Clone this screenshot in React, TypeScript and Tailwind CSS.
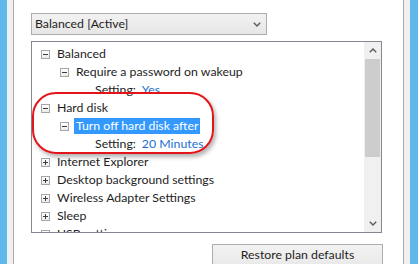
import React from 'react';

type Row = {
  level: number;
  label: string;
  kind: 'minus' | 'plus' | 'setting';
  value?: string;
  selected?: boolean;
};

const rows: Row[] = [
  { level: 0, label: 'Balanced', kind: 'minus' },
  { level: 1, label: 'Require a password on wakeup', kind: 'minus' },
  { level: 2, label: 'Setting:', kind: 'setting', value: 'Yes' },
  { level: 0, label: 'Hard disk', kind: 'minus' },
  { level: 1, label: 'Turn off hard disk after', kind: 'minus', selected: true },
  { level: 2, label: 'Setting:', kind: 'setting', value: '20 Minutes' },
  { level: 0, label: 'Internet Explorer', kind: 'plus' },
  { level: 0, label: 'Desktop background settings', kind: 'plus' },
  { level: 0, label: 'Wireless Adapter Settings', kind: 'plus' },
  { level: 0, label: 'Sleep', kind: 'plus' },
  { level: 0, label: 'USB settings', kind: 'plus' },
];

function Expander({ open }: { open: boolean }) {
  return (
    <span className="relative w-[9px] h-[9px] border border-[#a6a6a6] bg-gradient-to-b from-white to-[#ececec] shrink-0">
      <span className="absolute left-[1px] top-[3px] w-[5px] h-px bg-[#3c3c3c]" />
      {!open && <span className="absolute left-[3px] top-[1px] w-px h-[5px] bg-[#3c3c3c]" />}
    </span>
  );
}

function Chevron({ up }: { up?: boolean }) {
  return (
    <svg width="8" height="5" viewBox="0 0 8 5" className={up ? 'rotate-180' : ''}>
      <path d="M0.8 0.8 L4 4 L7.2 0.8" fill="none" stroke="#5a5a5a" strokeWidth="1.4" />
    </svg>
  );
}

function TreeRow({ row }: { row: Row }) {
  if (row.kind === 'setting') {
    return (
      <div className="h-[18px] shrink-0 flex items-center pl-[63px] text-[#1e1e1e]">
        <span>{row.label}</span>
        <span className="ml-[6px] text-[#1a6fd4]">{row.value}</span>
      </div>
    );
  }
  return (
    <div className={`h-[18px] shrink-0 flex items-center ${row.level === 0 ? 'pl-[9px]' : 'pl-[28px]'}`}>
      <Expander open={row.kind === 'minus'} />
      <span
        className={
          row.selected
            ? 'ml-[5px] px-[2px] h-[16px] leading-[16px] bg-[#3399ff] text-white'
            : 'ml-[7px] text-[#1e1e1e]'
        }
      >
        {row.label}
      </span>
    </div>
  );
}

export default function App() {
  return (
    <div
      className="w-[418px] h-[264px] overflow-hidden flex text-[12.3px]"
      style={{ fontFamily: 'Lato, "Segoe UI", sans-serif' }}
    >
      <div className="w-[7px] bg-[#5fb7ea]" />
      <div className="w-[7px] bg-[#f0f0f0] border-r border-[#a9a9a9]" />
      <div className="relative flex-1 bg-white pl-[17px] pt-[13px] flex flex-col overflow-hidden">
        {/* plan dropdown */}
        <div className="shrink-0 w-[236px] h-[22px] border border-[#acacac] bg-gradient-to-b from-[#f2f2f2] to-[#e6e6e6] flex items-center pl-[3px] pr-[5px]">
          <span className="flex-1 text-[#1e1e1e]">Balanced [Active]</span>
          <Chevron />
        </div>

        {/* settings tree */}
        <div className="shrink-0 mt-[6px] w-[351px] h-[192px] border border-[#828790] flex overflow-hidden">
          <div className="flex-1 pt-[3px] flex flex-col">
            {rows.map((row, i) => (
              <TreeRow key={i} row={row} />
            ))}
          </div>
          <div className="w-[17px] bg-[#f0f0f0] flex flex-col">
            <div className="h-[17px] flex items-center justify-center">
              <Chevron up />
            </div>
            <div className="mx-px h-[98px] bg-[#cdcdcd]" />
            <div className="flex-1" />
            <div className="h-[17px] flex items-center justify-center">
              <Chevron />
            </div>
          </div>
        </div>

        {/* restore button */}
        <div className="shrink-0 mt-[11px] ml-[181px] w-[171px] h-[30px] border border-[#acacac] bg-gradient-to-b from-[#f2f2f2] to-[#e6e6e6] flex justify-center pt-[1px] text-[#1e1e1e]">
          Restore plan defaults
        </div>

        {/* red annotation */}
        <div className="absolute left-[18px] top-[92px] w-[182px] h-[62px] rounded-[24px] border-2 border-[#e4141b] shadow-[2px_3px_4px_rgba(0,0,0,0.3)]" />
      </div>
      <div className="w-[7px] bg-[#f0f0f0] border-l border-[#a9a9a9]" />
      <div className="w-[8px] bg-[#5fb7ea]" />
    </div>
  );
}
